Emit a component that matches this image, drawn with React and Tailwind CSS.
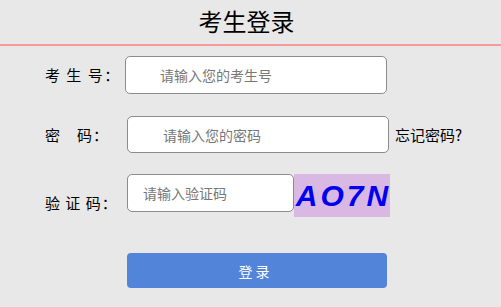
export default function App() {
  const cjk = { fontFamily: '"Noto Sans CJK SC", "Microsoft YaHei", sans-serif' };
  return (
    <div className="w-[501px] h-[307px] bg-[#e8e8e8] text-black overflow-hidden" style={cjk}>
      <div className="h-[46px] border-b-2 border-[#f59b9b] flex items-center justify-center">
        <h1 className="text-[24px] leading-[30px] pr-[8px] pb-[2px]">考生登录</h1>
      </div>
      <div className="pl-[45px] pt-[10px] flex flex-col">
        <div className="flex items-center">
          <div className="w-[80px] shrink-0 whitespace-nowrap text-[15px] leading-[20px] tracking-[1.5px]">考 生 号：</div>
          <input
            className="w-[262px] h-[38px] bg-white border border-[#8c8c8c] rounded-[5px] pl-[34px] text-[14px] placeholder:text-[#777] outline-none"
            placeholder="请输入您的考生号"
          />
        </div>
        <div className="flex items-center mt-[22px]">
          <div className="w-[82px] shrink-0 whitespace-nowrap text-[15px] leading-[20px] tracking-[1px]">密　码：</div>
          <input
            className="w-[262px] h-[37px] bg-white border border-[#8c8c8c] rounded-[5px] pl-[35px] text-[14px] placeholder:text-[#777] outline-none"
            placeholder="请输入您的密码"
            type="text"
          />
          <span className="ml-[6px] whitespace-nowrap text-[15px] leading-[20px]">忘记密码?</span>
        </div>
        <div className="flex items-start mt-[21px]">
          <div className="w-[82px] shrink-0 whitespace-nowrap text-[15px] leading-[20px] mt-[19px] tracking-[1px]">验 证 码：</div>
          <input
            className="w-[167px] h-[38px] bg-white border border-[#8c8c8c] rounded-[5px] pl-[15px] text-[14px] placeholder:text-[#777] outline-none"
            placeholder="请输入验证码"
          />
          <div
            className="w-[96px] h-[43px] bg-[#d9b9e3] flex items-center justify-center text-[30px] font-bold italic text-[#0000f0] tracking-[3px] leading-none pl-[3px]"
            style={{ fontFamily: '"Liberation Sans", Arial, sans-serif' }}
          >
            AO7N
          </div>
        </div>
        <button className="ml-[82px] mt-[36px] w-[260px] h-[35px] bg-[#5285d9] rounded-[4px] text-white text-[14px] leading-[20px] pr-[6px]">
          登 录
        </button>
      </div>
    </div>
  );
}
